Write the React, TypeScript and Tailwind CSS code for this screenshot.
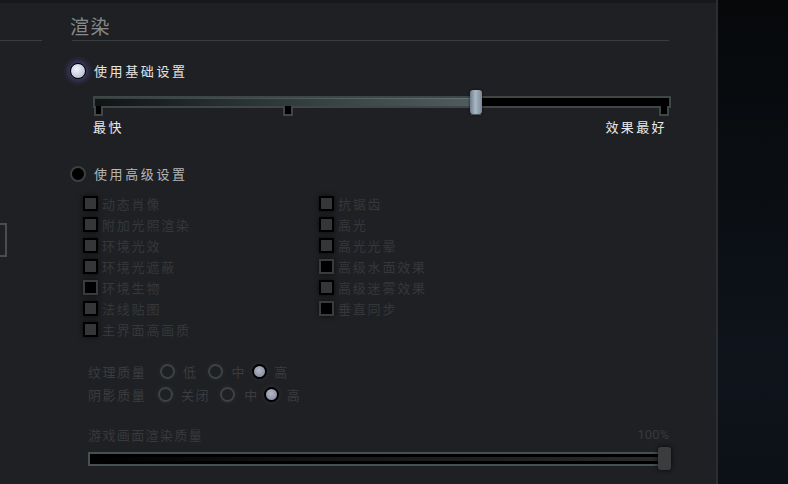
import React from 'react';

const leftChecks: [string, boolean][] = [
  ['动态肖像', false],
  ['附加光照渲染', false],
  ['环境光效', false],
  ['环境光遮蔽', false],
  ['环境生物', true],
  ['法线贴图', false],
  ['主界面高画质', false],
];

const rightChecks: [string, boolean][] = [
  ['抗锯齿', false],
  ['高光', false],
  ['高光光晕', false],
  ['高级水面效果', true],
  ['高级迷雾效果', false],
  ['垂直同步', true],
];

const CheckRow: React.FC<{ label: string; checked: boolean }> = ({ label, checked }) => (
  <div className="h-[21px] flex items-center">
    <span
      className={
        checked
          ? 'shrink-0 w-[15px] h-[15px] border-2 border-[#3a3b3d] bg-black shadow-[0_0_5px_rgba(0,0,0,0.6)]'
          : 'shrink-0 w-[15px] h-[15px] border-2 border-black bg-[#353638] shadow-[0_0_5px_rgba(0,0,0,0.6)]'
      }
    />
    <span className="ml-[4px] text-[13px] leading-[17px] tracking-[1.8px] text-[#35373a]">{label}</span>
  </div>
);

const SmallRadio: React.FC<{ on?: boolean; className?: string }> = ({ on, className = '' }) =>
  on ? (
    <span
      className={`block shrink-0 w-[15px] h-[15px] rounded-full border-2 border-black bg-[radial-gradient(circle_at_45%_40%,#b4b8c8,#7d8194)] shadow-[0_0_6px_rgba(255,255,255,0.08)] ${className}`}
    />
  ) : (
    <span
      className={`block shrink-0 w-[15px] h-[15px] rounded-full border-2 border-[#3d4343] shadow-[0_0_6px_rgba(255,255,255,0.06)] ${className}`}
    />
  );

export default function App() {
  return (
    <div className="w-[788px] h-[484px] flex overflow-hidden bg-[#1f2023] font-['Noto_Sans_CJK_SC','Noto_Sans',sans-serif]">
      {/* settings panel */}
      <div className="w-[718px] flex flex-col border-r-2 border-[#2b2d30]">
        <div className="h-[3px] bg-[#17181a]" />
        <div className="flex-1 flex">
          {/* left edge remnants */}
          <div className="w-[70px] flex flex-col">
            <div className="mt-[37px] w-[42px] h-px bg-[#3a3d40]" />
            <div className="mt-[182px] w-[7px] h-[34px] border-2 border-l-0 border-[#4a4c4e]" />
          </div>

          {/* main column */}
          <div className="w-[600px] flex flex-col">
            <div className="h-[37px] pt-[12px] text-[19px] leading-[22px] tracking-[1.5px] text-[#858b8b]">渲染</div>
            <div className="ml-[2px] w-[597px] h-px bg-[#3a3d40]" />

            {/* basic settings */}
            <div className="mt-[22px] h-[16px] flex items-center">
              <span className="shrink-0 w-[16px] h-[16px] rounded-full border-[1.5px] border-black bg-[radial-gradient(circle_at_40%_35%,#f2f4ff,#a9b0c8)] shadow-[0_0_6px_2px_rgba(110,110,230,0.45)]" />
              <span className="ml-[8px] text-[13px] leading-[16px] tracking-[2.6px] text-[#e4e4e4]">使用基础设置</span>
            </div>

            <div className="mt-[11px] ml-[23px] w-[578px] h-[28px] relative">
              <div className="mt-[6px] h-[12px] border-2 border-[#3e4745] bg-black flex">
                <div className="w-[375px] h-full bg-[linear-gradient(to_right,#101414,#2a3333_40%,#4f5c5e)] shadow-[inset_0_1px_0_rgba(160,180,180,0.25)]" />
              </div>
              <div className="flex">
                <span className="ml-[1px] w-[9px] h-[10px] -mt-[2px] border-2 border-t-0 border-[#3e4745] bg-black" />
                <span className="ml-[180px] w-[10px] h-[10px] -mt-[2px] border-2 border-t-0 border-[#3e4745] bg-black" />
                <span className="ml-[366px] w-[10px] h-[10px] -mt-[2px] border-2 border-t-0 border-[#3e4745] bg-black" />
              </div>
              <div className="absolute left-[377px] top-0 w-[12px] h-[28px] flex flex-col items-center">
                <div className="w-[12px] h-[24px] rounded-[3px] bg-[linear-gradient(to_right,#6d7b8b,#a9b6c4_45%,#7a8898)] shadow-[0_0_3px_rgba(0,0,0,0.7)]" />
                <div className="w-[10px] h-[3px] bg-[#1a1c1e] border-t border-[#4a5456]" />
              </div>
            </div>

            <div className="ml-[23px] w-[572px] h-[17px] flex justify-between text-[13px] leading-[17px] tracking-[2.4px] text-[#e8e8e8]">
              <span>最快</span>
              <span className="-mr-[2px]">效果最好</span>
            </div>

            {/* advanced settings */}
            <div className="mt-[31px] h-[16px] flex items-center">
              <span className="shrink-0 w-[16px] h-[16px] rounded-full border-2 border-[#3a4040] bg-black" />
              <span className="ml-[8px] text-[13px] leading-[16px] tracking-[2.6px] text-[#b6b6b6]">使用高级设置</span>
            </div>

            <div className="mt-[11px] ml-[13px] grid grid-cols-[236px_1fr]">
              <div className="flex flex-col">
                {leftChecks.map(([l, c]) => (
                  <CheckRow key={l} label={l} checked={c} />
                ))}
              </div>
              <div className="flex flex-col">
                {rightChecks.map(([l, c]) => (
                  <CheckRow key={l} label={l} checked={c} />
                ))}
              </div>
            </div>

            {/* quality radios */}
            <div className="mt-[20px] ml-[18px] flex flex-col text-[13px] leading-[17px] tracking-[1.6px] text-[#3a3c3f]">
              <div className="h-[23px] flex items-center">
                <span className="w-[72px]">纹理质量</span>
                <SmallRadio />
                <span className="ml-[8px]">低</span>
                <SmallRadio className="ml-[10px]" />
                <span className="ml-[9px]">中</span>
                <SmallRadio on className="ml-[6px]" />
                <span className="ml-[7px]">高</span>
              </div>
              <div className="h-[23px] flex items-center">
                <span className="w-[70px]">阴影质量</span>
                <SmallRadio />
                <span className="ml-[8px]">关闭</span>
                <SmallRadio className="ml-[10px]" />
                <span className="ml-[9px]">中</span>
                <SmallRadio on className="ml-[5px]" />
                <span className="ml-[8px]">高</span>
              </div>
            </div>

            {/* render quality slider */}
            <div className="mt-[20px] ml-[18px] w-[581px] h-[17px] flex justify-between text-[13px] leading-[17px] text-[#38393c]">
              <span className="tracking-[1.4px]">游戏画面渲染质量</span>
              <span className="font-['Roboto',sans-serif]">100%</span>
            </div>
            <div className="mt-[4px] ml-[18px] w-[584px] h-[23px] relative">
              <div className="mt-[5px] w-[580px] h-[14px] border-2 border-[#46504e] bg-[linear-gradient(to_right,#000,#151616_40%,#2a2b2b)] shadow-[inset_0_3px_0_#000,inset_0_-3px_0_#000]" />
              <div className="absolute left-[570px] top-0 w-[13px] h-[23px] rounded-[3px] bg-[#3b3c3e] shadow-[0_0_5px_rgba(0,0,0,0.8)]" />
            </div>
          </div>
        </div>
      </div>

      {/* dark side area */}
      <div className="flex-1 bg-[linear-gradient(to_bottom,#06080a,#0b0f14_45%,#0e141b_75%,#0c1117)]" />
    </div>
  );
}
